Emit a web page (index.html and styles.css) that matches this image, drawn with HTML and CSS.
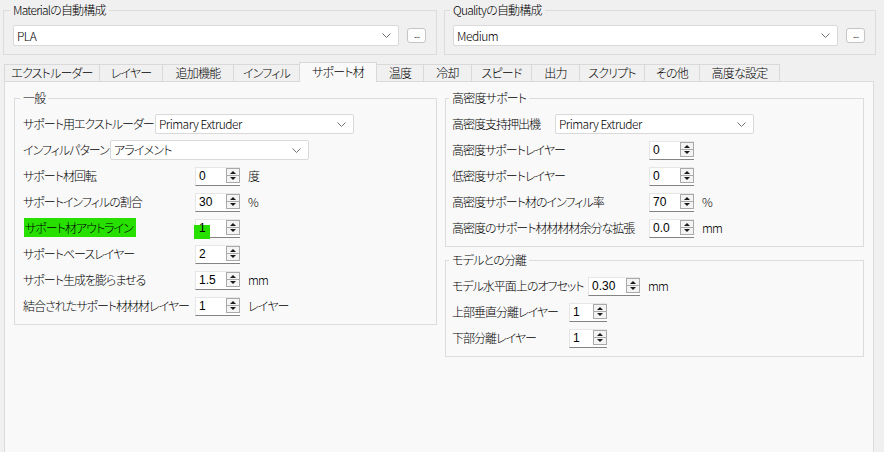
FILE: index.html
```html
<!DOCTYPE html>
<html lang="ja">
<head>
<meta charset="utf-8">
<title>サポート材</title>
<link rel="stylesheet" href="styles.css">
</head>
<body>
<div class="top">
  <fieldset class="cfg cfg-mat">
    <legend>Materialの自動構成</legend>
    <div class="cfg-row">
      <div class="combo combo-top"><span>PLA</span><svg class="chev" width="9" height="5" viewBox="0 0 9 5"><path d="M0.5 0.5 L4.5 4.5 L8.5 0.5" fill="none" stroke="#707070"/></svg></div>
      <button class="more">...</button>
    </div>
  </fieldset>
  <fieldset class="cfg cfg-qual">
    <legend>Qualityの自動構成</legend>
    <div class="cfg-row">
      <div class="combo combo-top"><span>Medium</span><svg class="chev" width="9" height="5" viewBox="0 0 9 5"><path d="M0.5 0.5 L4.5 4.5 L8.5 0.5" fill="none" stroke="#707070"/></svg></div>
      <button class="more">...</button>
    </div>
  </fieldset>
</div>

<div class="tabs">
  <div class="tab">エクストルーダー</div>
  <div class="tab">レイヤー</div>
  <div class="tab">追加機能</div>
  <div class="tab">インフィル</div>
  <div class="tab sel">サポート材</div>
  <div class="tab">温度</div>
  <div class="tab">冷却</div>
  <div class="tab">スピード</div>
  <div class="tab">出力</div>
  <div class="tab">スクリプト</div>
  <div class="tab">その他</div>
  <div class="tab">高度な設定</div>
</div>

<div class="pane">
  <fieldset class="grp grp-l">
    <legend>一般</legend>
    <div class="rows">
      <div class="row"><span class="lab lab-ext">サポート用エクストルーダー</span><div class="combo combo-in"><span>Primary Extruder</span><svg class="chev" width="9" height="5" viewBox="0 0 9 5"><path d="M0.5 0.5 L4.5 4.5 L8.5 0.5" fill="none" stroke="#707070"/></svg></div></div>
      <div class="row"><span class="lab lab-pat">インフィルパターン</span><div class="combo combo-in"><span class="jp">アライメント</span><svg class="chev" width="9" height="5" viewBox="0 0 9 5"><path d="M0.5 0.5 L4.5 4.5 L8.5 0.5" fill="none" stroke="#707070"/></svg></div></div>
      <div class="row"><span class="lab lab-l">サポート材回転</span><div class="spin"><span class="val">0</span><svg class="arr" width="14" height="15" viewBox="0 0 14 15"><rect x="0.5" y="0.5" width="13" height="14" fill="#f4f4f4" stroke="#a9a9a9"/><line x1="1" y1="7.5" x2="13" y2="7.5" stroke="#a9a9a9"/><path d="M7 3 L10 6 L4 6 Z" fill="#1a1a1a"/><path d="M7 12 L10 9 L4 9 Z" fill="#1a1a1a"/></svg></div><span class="unit">度</span></div>
      <div class="row"><span class="lab lab-l">サポートインフィルの割合</span><div class="spin"><span class="val">30</span><svg class="arr" width="14" height="15" viewBox="0 0 14 15"><rect x="0.5" y="0.5" width="13" height="14" fill="#f4f4f4" stroke="#a9a9a9"/><line x1="1" y1="7.5" x2="13" y2="7.5" stroke="#a9a9a9"/><path d="M7 3 L10 6 L4 6 Z" fill="#1a1a1a"/><path d="M7 12 L10 9 L4 9 Z" fill="#1a1a1a"/></svg></div><span class="unit">%</span></div>
      <div class="row"><span class="lab lab-l"><span class="hl">サポート材アウトライン</span></span><div class="spin"><span class="mark"></span><span class="val">1</span><svg class="arr" width="14" height="15" viewBox="0 0 14 15"><rect x="0.5" y="0.5" width="13" height="14" fill="#f4f4f4" stroke="#a9a9a9"/><line x1="1" y1="7.5" x2="13" y2="7.5" stroke="#a9a9a9"/><path d="M7 3 L10 6 L4 6 Z" fill="#1a1a1a"/><path d="M7 12 L10 9 L4 9 Z" fill="#1a1a1a"/></svg></div></div>
      <div class="row"><span class="lab lab-l">サポートベースレイヤー</span><div class="spin"><span class="val">2</span><svg class="arr" width="14" height="15" viewBox="0 0 14 15"><rect x="0.5" y="0.5" width="13" height="14" fill="#f4f4f4" stroke="#a9a9a9"/><line x1="1" y1="7.5" x2="13" y2="7.5" stroke="#a9a9a9"/><path d="M7 3 L10 6 L4 6 Z" fill="#1a1a1a"/><path d="M7 12 L10 9 L4 9 Z" fill="#1a1a1a"/></svg></div></div>
      <div class="row"><span class="lab lab-l">サポート生成を膨らませる</span><div class="spin"><span class="val">1.5</span><svg class="arr" width="14" height="15" viewBox="0 0 14 15"><rect x="0.5" y="0.5" width="13" height="14" fill="#f4f4f4" stroke="#a9a9a9"/><line x1="1" y1="7.5" x2="13" y2="7.5" stroke="#a9a9a9"/><path d="M7 3 L10 6 L4 6 Z" fill="#1a1a1a"/><path d="M7 12 L10 9 L4 9 Z" fill="#1a1a1a"/></svg></div><span class="unit">mm</span></div>
      <div class="row"><span class="lab lab-l">結合されたサポート材材材レイヤー</span><div class="spin"><span class="val">1</span><svg class="arr" width="14" height="15" viewBox="0 0 14 15"><rect x="0.5" y="0.5" width="13" height="14" fill="#f4f4f4" stroke="#a9a9a9"/><line x1="1" y1="7.5" x2="13" y2="7.5" stroke="#a9a9a9"/><path d="M7 3 L10 6 L4 6 Z" fill="#1a1a1a"/><path d="M7 12 L10 9 L4 9 Z" fill="#1a1a1a"/></svg></div><span class="unit">レイヤー</span></div>
    </div>
  </fieldset>

  <div class="col-r">
    <fieldset class="grp grp-r">
      <legend>高密度サポート</legend>
      <div class="rows">
        <div class="row"><span class="lab lab-hd">高密度支持押出機</span><div class="combo combo-in"><span>Primary Extruder</span><svg class="chev" width="9" height="5" viewBox="0 0 9 5"><path d="M0.5 0.5 L4.5 4.5 L8.5 0.5" fill="none" stroke="#707070"/></svg></div></div>
        <div class="row"><span class="lab lab-r">高密度サポートレイヤー</span><div class="spin"><span class="val">0</span><svg class="arr" width="14" height="15" viewBox="0 0 14 15"><rect x="0.5" y="0.5" width="13" height="14" fill="#f4f4f4" stroke="#a9a9a9"/><line x1="1" y1="7.5" x2="13" y2="7.5" stroke="#a9a9a9"/><path d="M7 3 L10 6 L4 6 Z" fill="#1a1a1a"/><path d="M7 12 L10 9 L4 9 Z" fill="#1a1a1a"/></svg></div></div>
        <div class="row"><span class="lab lab-r">低密度サポートレイヤー</span><div class="spin"><span class="val">0</span><svg class="arr" width="14" height="15" viewBox="0 0 14 15"><rect x="0.5" y="0.5" width="13" height="14" fill="#f4f4f4" stroke="#a9a9a9"/><line x1="1" y1="7.5" x2="13" y2="7.5" stroke="#a9a9a9"/><path d="M7 3 L10 6 L4 6 Z" fill="#1a1a1a"/><path d="M7 12 L10 9 L4 9 Z" fill="#1a1a1a"/></svg></div></div>
        <div class="row"><span class="lab lab-r">高密度サポート材のインフィル率</span><div class="spin"><span class="val">70</span><svg class="arr" width="14" height="15" viewBox="0 0 14 15"><rect x="0.5" y="0.5" width="13" height="14" fill="#f4f4f4" stroke="#a9a9a9"/><line x1="1" y1="7.5" x2="13" y2="7.5" stroke="#a9a9a9"/><path d="M7 3 L10 6 L4 6 Z" fill="#1a1a1a"/><path d="M7 12 L10 9 L4 9 Z" fill="#1a1a1a"/></svg></div><span class="unit">%</span></div>
        <div class="row"><span class="lab lab-r">高密度のサポート材材材材余分な拡張</span><div class="spin"><span class="val">0.0</span><svg class="arr" width="14" height="15" viewBox="0 0 14 15"><rect x="0.5" y="0.5" width="13" height="14" fill="#f4f4f4" stroke="#a9a9a9"/><line x1="1" y1="7.5" x2="13" y2="7.5" stroke="#a9a9a9"/><path d="M7 3 L10 6 L4 6 Z" fill="#1a1a1a"/><path d="M7 12 L10 9 L4 9 Z" fill="#1a1a1a"/></svg></div><span class="unit">mm</span></div>
      </div>
    </fieldset>
    <fieldset class="grp grp-r grp-sep">
      <legend>モデルとの分離</legend>
      <div class="rows">
        <div class="row"><span class="lab lab-off">モデル水平面上のオフセット</span><div class="spin spin-w"><span class="val">0.30</span><svg class="arr" width="14" height="15" viewBox="0 0 14 15"><rect x="0.5" y="0.5" width="13" height="14" fill="#f4f4f4" stroke="#a9a9a9"/><line x1="1" y1="7.5" x2="13" y2="7.5" stroke="#a9a9a9"/><path d="M7 3 L10 6 L4 6 Z" fill="#1a1a1a"/><path d="M7 12 L10 9 L4 9 Z" fill="#1a1a1a"/></svg></div><span class="unit">mm</span></div>
        <div class="row"><span class="lab lab-sep">上部垂直分離レイヤー</span><div class="spin spin-n"><span class="val">1</span><svg class="arr" width="14" height="15" viewBox="0 0 14 15"><rect x="0.5" y="0.5" width="13" height="14" fill="#f4f4f4" stroke="#a9a9a9"/><line x1="1" y1="7.5" x2="13" y2="7.5" stroke="#a9a9a9"/><path d="M7 3 L10 6 L4 6 Z" fill="#1a1a1a"/><path d="M7 12 L10 9 L4 9 Z" fill="#1a1a1a"/></svg></div></div>
        <div class="row"><span class="lab lab-sep">下部分離レイヤー</span><div class="spin spin-n"><span class="val">1</span><svg class="arr" width="14" height="15" viewBox="0 0 14 15"><rect x="0.5" y="0.5" width="13" height="14" fill="#f4f4f4" stroke="#a9a9a9"/><line x1="1" y1="7.5" x2="13" y2="7.5" stroke="#a9a9a9"/><path d="M7 3 L10 6 L4 6 Z" fill="#1a1a1a"/><path d="M7 12 L10 9 L4 9 Z" fill="#1a1a1a"/></svg></div></div>
      </div>
    </fieldset>
  </div>
</div>
</body>
</html>
```

FILE: styles.css
```css
html, body {
  margin: 0;
  padding: 0;
}
body {
  width: 884px;
  height: 452px;
  overflow: hidden;
  background: #f0f0f0;
  color: #000;
  font-family: "Noto Sans CJK JP", "Noto Sans", sans-serif;
  font-size: 12px;
  font-weight: 300;
  line-height: 16px;
  letter-spacing: -0.5px;
  font-feature-settings: "palt";
}

fieldset {
  margin: 0;
  min-width: 0;
  border: 1px solid #dcdcdc;
  box-sizing: border-box;
}
legend {
  padding: 0 3px;
  margin-left: -3px;
  line-height: 16px;
  white-space: nowrap;
  letter-spacing: -0.8px;
}

/* top auto-config boxes */
.top {
  display: flex;
  gap: 7px;
  padding: 2px 0 0 3px;
}
.cfg {
  padding: 7px 10px 8px 9px;
}
.cfg-mat { width: 434px; }
.cfg-qual { width: 432px; padding-left: 8px; }
.cfg-row {
  display: flex;
  align-items: center;
  gap: 8px;
}

.combo {
  display: flex;
  align-items: center;
  justify-content: space-between;
  box-sizing: border-box;
  background: #fff;
  border: 1px solid #d9d9d9;
  border-radius: 2px;
  padding: 0 7px 0 3px;
  white-space: nowrap;
}
.combo-top {
  flex: 1;
  height: 21px;
}
.combo-in {
  width: 199px;
  height: 20px;
  flex-shrink: 0;
}
.jp { letter-spacing: -0.8px; }
.chev { flex-shrink: 0; }

.more {
  width: 19px;
  height: 15px;
  padding: 0;
  box-sizing: border-box;
  border: 1px solid #c6c6c6;
  border-radius: 3px;
  background: #fdfdfd;
  font: 9px/11px "DejaVu Sans", sans-serif;
  color: #222;
  letter-spacing: -1px;
  text-align: center;
}

/* tabs */
.tabs {
  display: flex;
  align-items: flex-end;
  height: 20px;
  margin-top: 7px;
  padding-left: 4px;
}
.tab {
  height: 18px;
  box-sizing: border-box;
  border: 1px solid #d9d9d9;
  margin-right: -1px;
  background: #f0f0f0;
  text-align: center;
  line-height: 16px;
  white-space: nowrap;
  letter-spacing: -0.8px;
}
.tab.sel {
  height: 20px;
  background: #f9f9f9;
  border-bottom: none;
  line-height: 17px;
  position: relative;
  z-index: 1;
}
.tab:nth-child(1)  { width: 96px; }
.tab:nth-child(2)  { width: 64px; }
.tab:nth-child(3)  { width: 72px; }
.tab:nth-child(4)  { width: 67px; }
.tab:nth-child(5)  { width: 78px; }
.tab:nth-child(6)  { width: 48px; }
.tab:nth-child(7)  { width: 49px; }
.tab:nth-child(8)  { width: 61px; }
.tab:nth-child(9)  { width: 49px; }
.tab:nth-child(10) { width: 66px; }
.tab:nth-child(11) { width: 56px; }
.tab:nth-child(12) { width: 81px; }

/* tab pane */
.pane {
  margin: -1px 0 0 4px;
  width: 870px;
  height: 380px;
  box-sizing: border-box;
  border: 1px solid #dcdcdc;
  background: #f9f9f9;
  padding: 8px 0 0 9px;
  display: flex;
  align-items: flex-start;
  gap: 8px;
}
.grp {
  padding: 8px 8px 8px 8px;
}
.grp-l { width: 423px; }
.col-r {
  width: 419px;
  display: flex;
  flex-direction: column;
  gap: 5px;
}
.grp-r {
  width: 419px;
  padding-left: 6px;
}
.grp-sep { padding-top: 8px; }

.rows {
  display: flex;
  flex-direction: column;
  gap: 6px;
}
.row {
  display: flex;
  align-items: center;
  height: 20px;
}
.lab {
  flex-shrink: 0;
  white-space: nowrap;
  letter-spacing: -1px;
}
.lab-ext { width: 132px; }
.lab-pat { width: 87px; }
.lab-l   { width: 172px; }
.lab-hd  { width: 103px; }
.lab-r   { width: 197px; }
.lab-off { width: 136px; }
.lab-sep { width: 117px; }

.hl {
  background: #27e000;
  padding: 1px 3px 1px 1px;
  margin-left: 1px;
}

/* spin boxes */
.spin {
  position: relative;
  flex-shrink: 0;
  display: flex;
  align-items: center;
  justify-content: space-between;
  width: 45px;
  height: 19px;
  box-sizing: border-box;
  background: #fff;
  border: 1px solid #e6e6e6;
  border-bottom-color: #838383;
  border-right: none;
  padding-left: 3px;
}
.spin-w { width: 52px; }
.spin-n { width: 38px; }
.val {
  position: relative;
  z-index: 1;
  font-family: "Liberation Sans", sans-serif;
  font-weight: 400;
  letter-spacing: 0;
  font-size: 12px;
}
.arr {
  flex-shrink: 0;
  display: block;
  margin-top: -1px;
}
.mark {
  position: absolute;
  left: -2px;
  top: 5px;
  width: 16px;
  height: 14px;
  background: #27e000;
}
.unit {
  margin-left: 8px;
  white-space: nowrap;
  letter-spacing: -0.8px;
}
```
